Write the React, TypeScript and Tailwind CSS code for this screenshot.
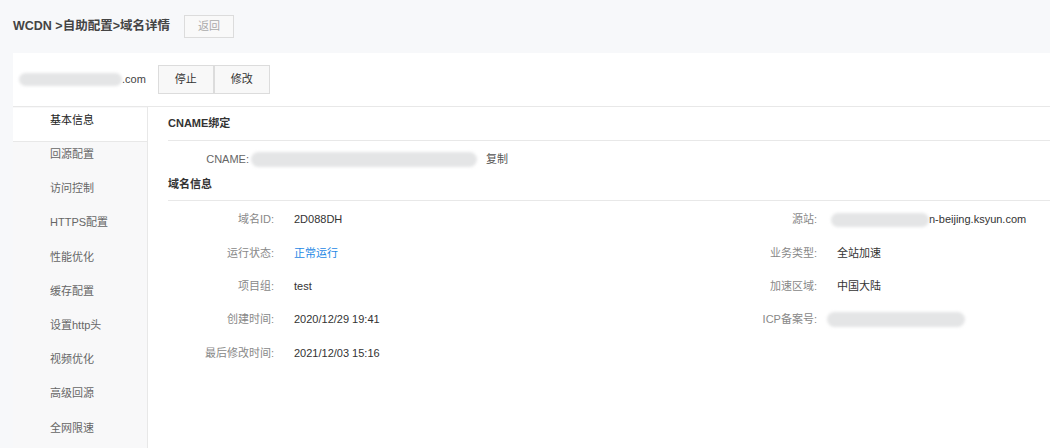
const font = { fontFamily: '"Liberation Sans", "Noto Sans CJK SC", sans-serif' };

const menu = [
  "基本信息",
  "回源配置",
  "访问控制",
  "HTTPS配置",
  "性能优化",
  "缓存配置",
  "设置http头",
  "视频优化",
  "高级回源",
  "全网限速",
];

const Blur = ({ w, h = 14 }: { w: number; h?: number }) => (
  <span
    className="inline-block rounded-full bg-[#e4e5e6] blur-[1.5px]"
    style={{ width: w, height: h }}
  />
);

interface RowProps {
  label: string;
  children: React.ReactNode;
}

const Row = ({ label, children }: RowProps) => (
  <div className="flex h-[33.3px] items-center">
    <span className="w-[106px] text-right text-[#888]">{label}</span>
    <span className="ml-[20px] text-[#333]">{children}</span>
  </div>
);

export default function App() {
  return (
    <div className="h-[448px] overflow-hidden bg-[#f7f8fa] text-[11px]" style={font}>
      <div className="flex h-[53px] items-center pl-[13px]">
        <h1 className="text-[12.5px] font-bold text-[#444]">WCDN &gt;自助配置&gt;域名详情</h1>
        <button className="ml-[14px] h-[23px] w-[50px] border border-[#dcdcdc] bg-[#f9f9f9] text-[#aaa]">
          返回
        </button>
      </div>

      <div className="ml-[13px] bg-white">
        <div className="flex h-[54px] items-center border-b border-[#e8e8e8] pl-[6px]">
          <Blur w={103} h={13} />
          <span className="text-[#444]">.com</span>
          <div className="ml-[12px] flex">
            <button className="h-[29px] w-[56px] border border-[#dcdcdc] bg-[#f8f8f8] text-[#333]">停止</button>
            <button className="h-[29px] w-[56px] border border-[#dcdcdc] bg-[#f8f8f8] text-[#333]">修改</button>
          </div>
        </div>

        <div className="flex h-[341px]">
          <ul className="w-[135px] border-r border-[#e8e8e8] bg-[#f8f8f9] pt-[1px]">
            {menu.map((item, i) => (
              <li
                key={item}
                className={
                  i === 0
                    ? "h-[34px] border-b border-[#e8e8e8] bg-white pl-[37px] leading-[24px] text-[#222]"
                    : "h-[34.2px] pl-[37px] leading-[24px] text-[#666]"
                }
              >
                {item}
              </li>
            ))}
          </ul>

          <div className="flex-1 pl-[20px]">
            <div className="flex h-[34px] items-center border-b border-[#e8e8e8] font-bold text-[#333]">
              CNAME绑定
            </div>
            <div className="mt-[8px] flex h-[20px] items-center">
              <span className="w-[81px] text-right text-[#666]">CNAME:</span>
              <span className="ml-[2px] flex items-center">
                <Blur w={226} h={15} />
              </span>
              <span className="ml-[9px] text-[#555]">复制</span>
            </div>
            <div className="flex h-[32px] items-center border-b border-[#e8e8e8] font-bold text-[#333]">
              域名信息
            </div>

            <div className="flex pt-[2px]">
              <div className="w-[543px]">
                <Row label="域名ID:">2D088DH</Row>
                <Row label="运行状态:">
                  <span className="text-[#1e88e5]">正常运行</span>
                </Row>
                <Row label="项目组:">test</Row>
                <Row label="创建时间:">2020/12/29 19:41</Row>
                <Row label="最后修改时间:">2021/12/03 15:16</Row>
              </div>
              <div className="flex-1">
                <Row label="源站:">
                  <span className="-ml-[6px] flex items-center">
                    <Blur w={98} h={14} />
                    n-beijing.ksyun.com
                  </span>
                </Row>
                <Row label="业务类型:">全站加速</Row>
                <Row label="加速区域:">中国大陆</Row>
                <Row label="ICP备案号:">
                  <span className="-ml-[10px] flex items-center">
                    <Blur w={138} h={15} />
                  </span>
                </Row>
              </div>
            </div>
          </div>
        </div>
      </div>
    </div>
  );
}
